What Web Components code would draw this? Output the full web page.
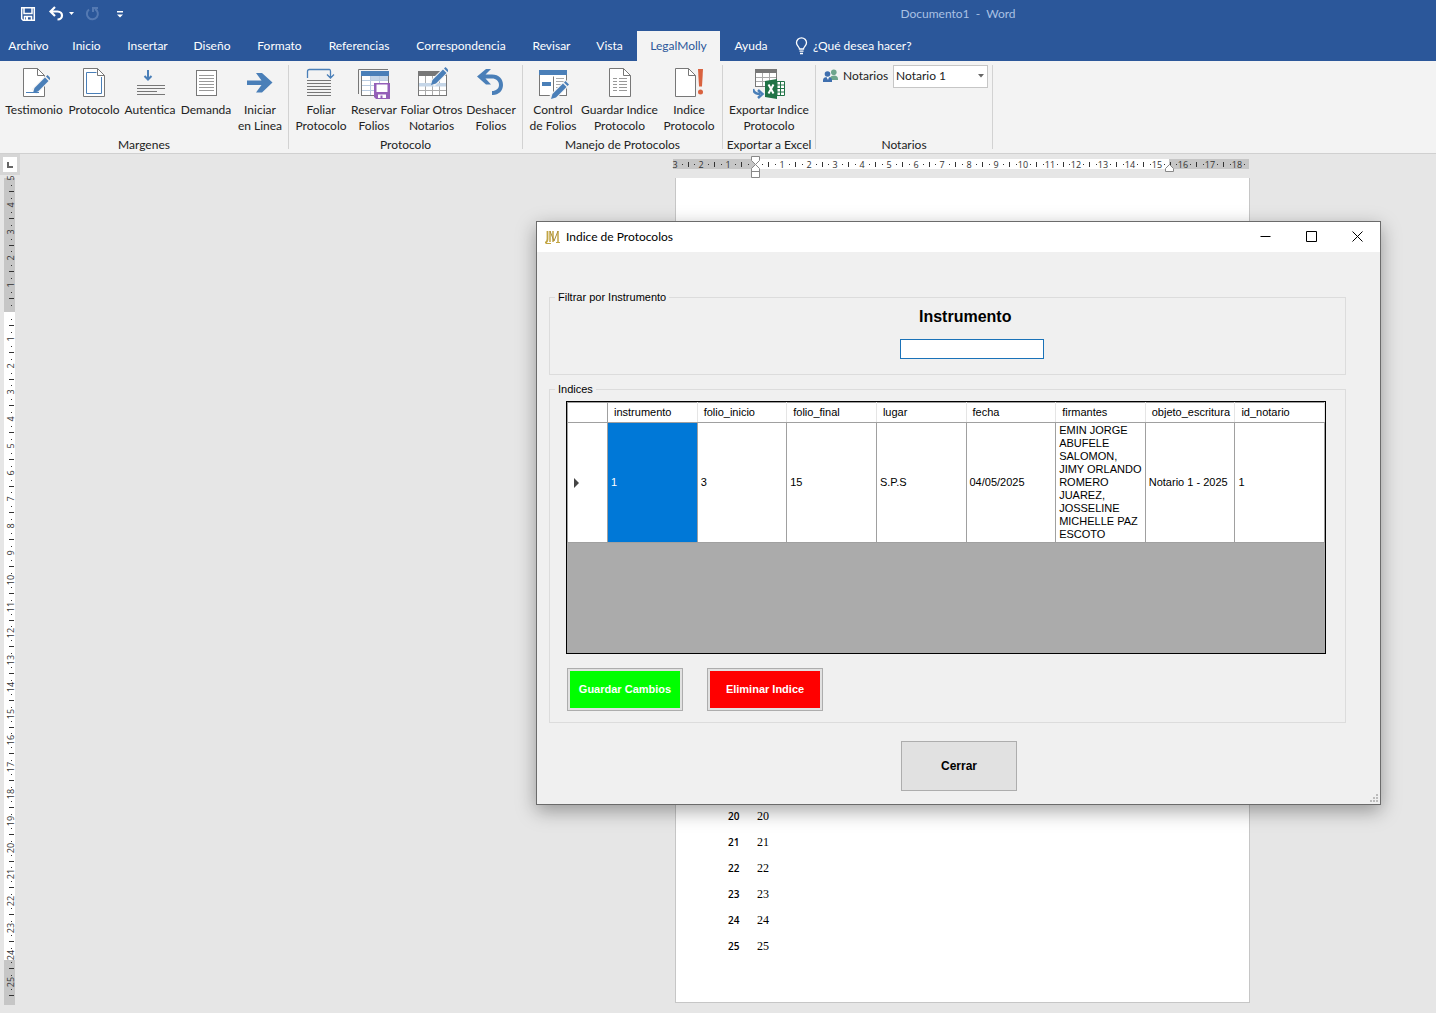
<!DOCTYPE html>
<html lang="es">
<head>
<meta charset="utf-8">
<title>Documento1 - Word</title>
<style>
  html, body { margin: 0; height: 100%; }
  body { font: 12px/16px Lato, "Open Sans", sans-serif; color: #222; background: #e6e6e6; }
</style>
</head>
<body>
<word-app></word-app>
<script>
const define = (name, markup, setup) => {
  const template = document.createElement('template');
  template.innerHTML = '<style>*{box-sizing:border-box}button,input,select{font:inherit;color:inherit;margin:0}</style>' + markup;
  customElements.define(name, class extends HTMLElement {
    constructor() {
      super();
      this.attachShadow({ mode: 'open' }).append(template.content.cloneNode(true));
    }
    connectedCallback() { if (setup) setup(this, this.shadowRoot); }
  });
};

const BLUE = '#4a7fb8', GREY = '#777';
const hlines = (x1, x2, ys, c = GREY) =>
  `<path d="${ys.map(y => `M${x1} ${y}H${x2}`).join('')}" stroke="${c}" fill="none"/>`;
const sheet = (x1, x2, fold) =>
  `<path d="M${x1} 1.5H${fold}L${x2} ${1.5 + x2 - fold}V29.5H${x1}Z" fill="#fff" stroke="${GREY}"/><path d="M${fold} 1.5V${1.5 + x2 - fold}H${x2}" fill="none" stroke="${GREY}"/>`;
const pencil = (x, y) =>
  `<g transform="translate(${x} ${y})"><path d="M1-1L17-17" stroke="#f3f3f3" stroke-width="7"/><path d="M0 0L1.5-5L12-15.500L15.500-12L5-1.500Z" fill="${BLUE}"/><path d="M13-16.500L14.500-18L18-14.500L16.500-13Z" fill="${BLUE}"/></g>`;

const ICONS = {
  testimonio: sheet(5.5, 26.5, 19.5) + pencil(15, 26) + `<path d="M8 25.500H21" stroke="${BLUE}"/>`,
  protocolo: sheet(5.5, 26.5, 19.5) + `<path d="M18.500 5.500H8.500V26.500H23.500V10" fill="none" stroke="${BLUE}"/>`,
  autentica: hlines(3, 31, [18.5, 21.5, 27.5]) + hlines(3, 23, [24.5]) +
    `<path d="M14 3V12M10.500 9L14 12.500L17.500 9" fill="none" stroke="${BLUE}" stroke-width="2"/>`,
  demanda: `<rect x="6.500" y="3.500" width="20" height="25" fill="#fff" stroke="${GREY}"/>` + hlines(9, 24, [8.5, 11.5, 14.5, 17.5, 20.5, 23.5], '#999'),
  iniciar: `<path d="M3 13.500H17.500L12 6H18L28.500 15.500L18 25.500H12L17.500 18H3Z" fill="${BLUE}"/>`,
  foliar: `<path d="M2.500 11V4.500Q2.500 2.500 4.500 2.500H24.500Q25.500 2.500 25.500 4.500V11M22 7.500L25.500 11L29 7.500" fill="none" stroke="${BLUE}" stroke-width="1.300"/>` + hlines(2, 26, [13.5, 16.5, 19.5, 22.5, 25.5, 28.5]),
  reservar: `<path d="M.5 27V2.500H30" fill="none" stroke="${GREY}"/><rect x="3.500" y="4.500" width="27" height="24" fill="#fff" stroke="${GREY}"/><path d="M3 4H31V9H3Z" fill="${BLUE}"/><path d="M13 9H30V13H13Z" fill="#c5d6e8"/><path d="M4 13.500H30M4 18.500H30M4 23.500H30M12.500 9V28M21.500 9V28" stroke="#b9cbe0" fill="none"/><path d="M16 16H32V32H18L16 30Z" fill="#9460b8"/><path d="M18.500 17.500H29.500V25H18.500Z" fill="#fff"/><path d="M20 27.500H28V31H20Z" fill="#fff"/><path d="M22.500 28.500H24.500V31H22.500Z" fill="#9460b8"/>`,
  otros: `<rect x="2.500" y="4.500" width="28" height="24" fill="#fff" stroke="${GREY}"/><path d="M2 4H31V9H2Z" fill="${GREY}"/><path d="M9.500 9V28M16.500 9V28M23.500 9V28M3 23.500H30" stroke="#aaa"/><path d="M3 16H30V19.500H3Z" fill="#c5d6e8"/>` + pencil(15, 18),
  deshacer: `<path d="M2 9.500L11 2H16L10.500 7.500H17C24 7.500 28 12 28 18C28 24 23 28.500 17 28V24C21 24 24 21.500 24 18C24 14 21 11.500 17 11.500H10.500L16 17.500H11Z" fill="${BLUE}"/>`,
  control: `<rect x="2.500" y="3.500" width="27" height="25" fill="#fff" stroke="${GREY}"/><path d="M2 3H30V8H2Z" fill="${BLUE}"/><path d="M5 15H14V19H5Z" fill="${BLUE}"/><path d="M16.500 9.500V26" stroke="${GREY}"/>` + hlines(19, 27, [11.5, 14.5, 17.5, 20.5], '#aaa') + pencil(14, 32),
  guardar: sheet(5.5, 26.5, 19.5) + hlines(9, 13, [11.5, 14.5, 17.5, 20.5, 23.5], '#999') + hlines(15, 23, [11.5, 14.5, 17.5, 20.5, 23.5], '#999'),
  indice: sheet(2.5, 22.5, 15.5) + `<path d="M25 2H30L29 19.500H26Z" fill="#d9623f"/><circle cx="27.500" cy="25" r="2.500" fill="#d9623f"/>`,
  excel: `<rect x="2.500" y="2.500" width="21" height="17" fill="#fff" stroke="${GREY}"/><path d="M2 2H24V6H2Z" fill="${GREY}"/><path d="M9.500 6V19M16.500 6V19M3 10.500H23M3 14.500H23" stroke="#aaa"/><path d="M24 14.500H31.500V28.500H24Z" fill="#fff" stroke="#207346"/><path d="M24 18H32M24 21.500H32M24 25H32M27.500 14V29" stroke="#207346"/><path d="M12 14L24 12V32L12 30Z" fill="#207346"/><path d="M15.500 17.500L20.500 26.500M20.500 17.500L15.500 26.500" stroke="#fff" stroke-width="2"/><path d="M0 22Q1 27 7 27M5 23L9.500 27L5 31" stroke="${BLUE}" stroke-width="2.500" fill="none"/>`,
};

define('title-bar', `
<style>
  :host { display: flex; align-items: center; height: 31px; padding-bottom: 3px; background: #2b579a; color: #a9c1e4; }
  nav { display: flex; align-items: center; padding-left: 20px; width: 128px; justify-content: space-between; }
  button { border: 0; padding: 0; background: none; display: flex; }
  p { flex: 1; margin: 0 0 0 352px; text-align: center; white-space: pre; }
</style>
<nav>
  <button aria-label="Guardar"><svg width="16" height="16" fill="none" stroke="#fff" stroke-width="1.500"><path d="M1.700 1.700H14.300V14.300H3.200L1.700 12.800ZM4 2V7.500H12V2M4.500 14V10.500H11.500V14"/><path d="M6 11H8V14H6Z" fill="#fff" stroke="none"/></svg></button>
  <button aria-label="Deshacer"><svg width="27" height="16" fill="none" stroke="#fff" stroke-width="2.200"><path d="M8 1L3.500 5.500L8 10M4 5.500H10.500C16.500 5.500 16.500 13.500 10.500 13.500"/><path d="M22 6H27L24.500 9Z" fill="#fff" stroke="none"/></svg></button>
  <button aria-label="Rehacer"><svg width="16" height="16" fill="none" stroke="#5479b2" stroke-width="2"><path d="M4 3.500A5.500 5.500 0 1 0 10 3M8 1V6M7 2H13"/></svg></button>
  <button aria-label="Personalizar"><svg width="16" height="16"><path d="M5 5H11V6.500H5ZM5 8.500H11L8 11.500Z" fill="#fff"/></svg></button>
</nav>
<p>Documento1  -  Word</p>`);

define('ribbon-tabs', `
<style>
  :host { display: grid; grid-template-columns: 57px 59px 63px 66px 69px 90px 114px 67px 49px 3px 83px 62px auto; height: 30px; background: #2b579a; color: #fff; }
  a { display: flex; align-items: center; justify-content: center; color: inherit; text-decoration: none; white-space: nowrap; }
  a.on { grid-column: 11; background: #f3f3f3; color: #2b579a; }
  a.tell { justify-content: flex-start; gap: 5px; padding-left: 13px; }
</style>
<a href="#">Archivo</a><a href="#">Inicio</a><a href="#">Insertar</a><a href="#">Diseño</a><a href="#">Formato</a><a href="#">Referencias</a><a href="#">Correspondencia</a><a href="#">Revisar</a><a href="#">Vista</a><a href="#" class="on">LegalMolly</a><a href="#">Ayuda</a>
<a href="#" class="tell"><svg width="13" height="18" fill="none" stroke="#fff" stroke-width="1.300"><path d="M4.500 12C4.500 9.500 1.500 9 1.500 5.800A5 5 0 0 1 11.500 5.800C11.500 9 8.500 9.500 8.500 12ZM4.500 14.200H8.500M5 16.500H8"/></svg><span>¿Qué desea hacer?</span></a>`);

define('ribbon-button', `
<style>
  :host { display: block; }
  button { display: flex; flex-direction: column; align-items: center; gap: 3px; width: 100%; padding: 0; border: 0; background: none; text-align: center; white-space: nowrap; }
  .label { margin: 0 -8px; }
</style>
<button><svg width="32" height="32"></svg><span class="label"><slot></slot></span></button>`,
(el, root) => { root.querySelector('svg').innerHTML = ICONS[el.getAttribute('icon')]; });

define('ribbon-group', `
<style>
  :host { display: flex; padding: 4px 0; }
  section { display: flex; flex-direction: column; justify-content: space-between; padding: 0 4px; border-right: 1px solid #d2d2d2; }
  .items { display: flex; padding-top: 2px; }
  h2 { margin: 0 -6px -4px; font: inherit; text-align: center; white-space: nowrap; }
  ::slotted(ribbon-button) { flex: none; width: var(--w); }
</style>
<section><div class="items"><slot></slot></div><h2></h2></section>`,
(el, root) => { root.querySelector('h2').textContent = el.getAttribute('name'); });

define('notary-picker', `
<style>
  :host { display: flex; align-items: center; gap: 4px; height: 22px; padding-left: 3px; margin-top: -2px; }
  label { width: 46px; white-space: nowrap; }
  .box { display: grid; align-items: center; }
  .box > * { grid-area: 1 / 1; }
  select { width: 95px; height: 23px; padding: 0 2px; border: 1px solid #c6c6c6; border-radius: 0; background: #fff; appearance: none; outline: 0; }
  .box svg { justify-self: end; margin-right: 4px; pointer-events: none; }
</style>
<svg width="16" height="16"><circle cx="10.800" cy="4.300" r="2.800" fill="#6ea58c"/><path d="M7 12V9.500Q8 7.500 11 7.500Q15 7.500 15 11V12Z" fill="#6ea58c"/><circle cx="4.500" cy="6" r="2.800" fill="#3f6fae"/><path d="M0 14V12Q0 9 4.500 9Q9 9 9 12V14Z" fill="#3f6fae"/><path d="M3.500 9L5 12L6 9Z" fill="#fff"/></svg>
<label for="n">Notarios</label>
<span class="box"><select id="n"><option>Notario 1</option></select><svg width="6" height="4"><path d="M0 0H6L3 3.500Z" fill="#666"/></svg></span>`);

define('ribbon-bar', `
<style>:host { display: flex; height: 93px; background: #f3f3f3; border-bottom: 1px solid #d0d0d0; }</style>
<ribbon-group name="Margenes">
  <ribbon-button icon="testimonio" style="--w:60px">Testimonio</ribbon-button>
  <ribbon-button icon="protocolo" style="--w:60px">Protocolo</ribbon-button>
  <ribbon-button icon="autentica" style="--w:52px">Autentica</ribbon-button>
  <ribbon-button icon="demanda" style="--w:60px">Demanda</ribbon-button>
  <ribbon-button icon="iniciar" style="--w:48px">Iniciar<br>en Linea</ribbon-button>
</ribbon-group>
<ribbon-group name="Protocolo">
  <ribbon-button icon="foliar" style="--w:56px">Foliar<br>Protocolo</ribbon-button>
  <ribbon-button icon="reservar" style="--w:50px">Reservar<br>Folios</ribbon-button>
  <ribbon-button icon="otros" style="--w:65px">Foliar Otros<br>Notarios</ribbon-button>
  <ribbon-button icon="deshacer" style="--w:54px">Deshacer<br>Folios</ribbon-button>
</ribbon-group>
<ribbon-group name="Manejo de Protocolos">
  <ribbon-button icon="control" style="--w:52px">Control<br>de Folios</ribbon-button>
  <ribbon-button icon="guardar" style="--w:81px">Guardar Indice<br>Protocolo</ribbon-button>
  <ribbon-button icon="indice" style="--w:58px">Indice<br>Protocolo</ribbon-button>
</ribbon-group>
<ribbon-group name="Exportar a Excel">
  <ribbon-button icon="excel" style="--w:84px">Exportar Indice<br>Protocolo</ribbon-button>
</ribbon-group>
<ribbon-group name="Notarios"><notary-picker></notary-picker></ribbon-group>`);

/* A ruler numbered outwards from its zero point, in centimetres. */
define('doc-ruler', `
<style>:host { display: block; } svg { display: block; overflow: visible; } text { font: 9px "Open Sans", "Noto Sans", sans-serif; fill: #333; text-anchor: middle; }</style>
<svg></svg>`, (el, root) => {
  const svg = root.querySelector('svg');
  const num = n => Number(el.getAttribute(n));
  const vertical = el.hasAttribute('vertical');
  const len = num('length'), zero = num('zero'), end = num('end'), cm = 26.78;
  const size = vertical ? 20 : 24, top = vertical ? 4 : 5, band = vertical ? 11 : 10;
  svg.setAttribute('width', vertical ? size : len);
  svg.setAttribute('height', vertical ? len : size);
  const box = (a, b, w, h, fill) => vertical
    ? `<rect x="${b}" y="${a}" width="${h}" height="${w}" fill="${fill}"/>`
    : `<rect x="${a}" y="${b}" width="${w}" height="${h}" fill="${fill}"/>`;
  let out = box(0, top, len, band, '#c6c6c6') + box(zero, top, end - zero, band, '#fff');
  const mid = vertical ? 11 : 10;
  for (let i = num('from'); i <= num('to'); i++) {
    const p = Math.round(zero + i * cm);
    if (i) out += vertical
      ? `<text transform="translate(14 ${p}) rotate(-90)">${Math.abs(i)}</text>`
      : `<text x="${p}" y="14">${Math.abs(i)}</text>`;
    for (const q of [-7, 7]) if (p + q > 0 && p + q < len) out += box(p + q, mid, 1, 1, '#333');
    if (p + 13 < len) out += box(p + 13, mid - 2, 1, 5, '#333');
  }
  if (!vertical) {
    const marker = 'fill="#fff" stroke="#888"';
    out += `<path d="M78.500 2.500H86.500V6.500L82.500 10.500L78.500 6.500ZM82.500 10.500L86.500 14.500V23.500H78.500V14.500ZM78.500 17.500H86.500" ${marker}/>`
      + `<path d="M${end + .5} 10.500L${end + 4.5} 14.500V17.500H${end - 3.5}V14.500Z" ${marker}/>`;
  }
  svg.innerHTML = out;
});

define('doc-page', `
<style>
  :host { display: block; background: #fff; border: 1px solid #c6c6c6; border-top: 0; padding: 625px 0 0 52px; color: #000; }
  div { display: flex; align-items: center; gap: 17px; height: 26px; }
  small { font: 600 10px/16px "Open Sans", sans-serif; width: 12px; }
  span { font: 12px "Liberation Serif", serif; }
</style>`, (el, root) => {
  for (let n = 20; n <= 25; n++) {
    const row = document.createElement('div');
    row.innerHTML = `<small>${n}</small><span>${n}</span>`;
    root.append(row);
  }
});

define('group-box', `
<style>
  :host { display: block; }
  fieldset { margin: 0; padding: 0; min-width: 0; height: 100%; border: 1px solid #dcdcdc; }
  legend { margin-left: 5px; padding: 0 3px; line-height: 14px; }
</style>
<fieldset><legend></legend><slot></slot></fieldset>`,
(el, root) => { root.querySelector('legend').textContent = el.getAttribute('legend'); });

define('instrument-filter', `
<style>
  :host { display: flex; flex-direction: column; align-items: flex-start; gap: 13px; padding: 3px 0 0 350px; }
  label { margin-left: 19px; font-weight: bold; font-size: 16px; line-height: 19px; }
  input { width: 144px; height: 20px; padding: 1px 3px; border: 1px solid #1a72b8; background: #fff; outline: 0; border-radius: 0; }
</style>
<label for="i">Instrumento</label><input id="i" type="text">`);

define('index-grid', `
<style>
  :host { display: block; height: 253px; border: 1px solid #000; background: #ababab; }
  table { width: 100%; table-layout: fixed; border-collapse: collapse; background: #fff; line-height: 13px; }
  th, td { border: 1px solid #a0a0a0; padding: 0 0 0 3px; text-align: left; font-weight: normal; white-space: nowrap; }
  thead th { height: 20px; padding-left: 6px; border-left-color: #e5e5e5; border-right-color: #e5e5e5; }
  thead th:first-child { border-color: #a0a0a0; }
  td { height: 120px; }
  td.sel { background: #0078d7; color: #fff; }
  tbody th { padding-left: 6px; }
  svg { display: block; }
</style>
<table>
  <colgroup><col style="width:40px"><col span="8"></colgroup>
  <thead><tr><th></th><th>instrumento</th><th>folio_inicio</th><th>folio_final</th><th>lugar</th><th>fecha</th><th>firmantes</th><th>objeto_escritura</th><th>id_notario</th></tr></thead>
  <tbody><tr><th><svg width="6" height="10"><path d="M0 0L5 5L0 10Z" fill="#444"/></svg></th><td class="sel">1</td><td>3</td><td>15</td><td>S.P.S</td><td>04/05/2025</td><td>EMIN JORGE<br>ABUFELE<br>SALOMON,<br>JIMY ORLANDO<br>ROMERO<br>JUAREZ,<br>JOSSELINE<br>MICHELLE PAZ<br>ESCOTO</td><td>Notario 1 - 2025</td><td>1</td></tr></tbody>
</table>`);

define('form-button', `
<style>
  :host { display: block; width: 116px; height: 43px; }
  :host([large]) { height: 50px; font-size: 12px; }
  button { width: 100%; height: 100%; padding: 0; border: 1px solid #adadad; background: #e1e1e1; color: #000; font-weight: bold; white-space: nowrap; }
  :host([tone]) button { color: #fff; box-shadow: inset 0 0 0 2px #e1e1e1; }
  :host([tone=save]) button { background: #0f0; }
  :host([tone=delete]) button { background: #f00; }
</style>
<button><slot></slot></button>`);

define('index-dialog', `
<style>
  :host { display: block; border: 1px solid #6b6b6b; background: #f0f0f0; color: #000; box-shadow: 0 6px 18px rgba(0,0,0,.35); font: 11px/13px "Liberation Sans", sans-serif; }
  header { display: flex; align-items: center; height: 30px; padding-left: 8px; background: #fff; font: 12px/16px Lato, "Open Sans", sans-serif; }
  h1 { flex: 1; margin: 0 0 0 6px; font: inherit; }
  header button { display: flex; justify-content: center; width: 46px; height: 28px; padding: 8px 0 0; border: 0; background: none; }
  main { position: relative; padding: 38px 34px 13px 12px; }
  .filter { height: 85px; }
  .list { height: 341px; margin-top: 7px; }
  index-grid { margin: 5px 19px 0 16px; }
  .actions { display: flex; gap: 24px; margin: 14px 17px 0; }
  .close { margin: 18px auto 0 352px; }
  .grip { position: absolute; right: 1px; bottom: 1px; }
</style>
<header>
  <svg width="15" height="15" fill="none" stroke="#c2a544"><path d="M2.500 1V9Q2.500 12 0 13" stroke-width="1.800"/><path d="M5 1V12M8 1V12M13 1V12" stroke-width="1.500"/><path d="M5 1L9 11L13 1" stroke="#a88c3a"/><path d="M1 13.500H6M11 12.500H15"/></svg>
  <h1>Indice de Protocolos</h1>
  <button aria-label="Minimizar"><svg width="11" height="11" stroke="#000"><path d="M.5 5.500H10.500"/></svg></button>
  <button aria-label="Maximizar"><svg width="11" height="11" stroke="#000" fill="none"><path d="M.5 .5H10.500V10.500H.5Z"/></svg></button>
  <button aria-label="Cerrar ventana"><svg width="11" height="11" stroke="#000"><path d="M.5 .5L10.500 10.500M10.500 .5L.5 10.500"/></svg></button>
</header>
<main>
  <group-box class="filter" legend="Filtrar por Instrumento"><instrument-filter></instrument-filter></group-box>
  <group-box class="list" legend="Indices">
    <index-grid></index-grid>
    <div class="actions"><form-button tone="save">Guardar Cambios</form-button><form-button tone="delete">Eliminar Indice</form-button></div>
  </group-box>
  <form-button class="close" large>Cerrar</form-button>
  <svg class="grip" width="10" height="10" fill="#bcbcbc"><path d="M7 1h2v2h-2zM7 4h2v2h-2zM4 4h2v2h-2zM7 7h2v2h-2zM4 7h2v2h-2zM1 7h2v2h-2z"/></svg>
</main>`);

define('word-app', `
<style>
  :host { display: flex; flex-direction: column; min-height: 100vh; background: #e6e6e6; }
  .work { display: flex; flex: 1; }
  aside { width: 20px; }
  .corner { display: flex; align-items: center; justify-content: center; width: 20px; height: 21px; margin-bottom: 3px; background: #fff; border: 3px solid #d6d6d6; }
  .canvas { flex: 1; display: flex; flex-direction: column; align-items: center; padding: 0 0 10px 467px; }
  .sheet { display: flex; flex: 1; flex-direction: column; width: 577px; }
  doc-page { flex: 1; margin-left: 2px; }
  /* floating window over the document */
  index-dialog { position: absolute; left: 536px; top: 221px; width: 845px; }
</style>
<title-bar></title-bar>
<ribbon-tabs></ribbon-tabs>
<ribbon-bar></ribbon-bar>
<div class="work">
  <aside><div class="corner"><svg width="6" height="6"><path d="M1 0V5H6" fill="none" stroke="#666" stroke-width="2"/></svg></div>
  <doc-ruler vertical length="827" zero="134" end="782" from="-5" to="25"></doc-ruler></aside>
  <div class="canvas"><div class="sheet">
    <doc-ruler length="576" zero="82" end="496" from="-3" to="18"></doc-ruler>
    <doc-page></doc-page>
  </div></div>
</div>
<index-dialog></index-dialog>`);
</script>
</body>
</html>
